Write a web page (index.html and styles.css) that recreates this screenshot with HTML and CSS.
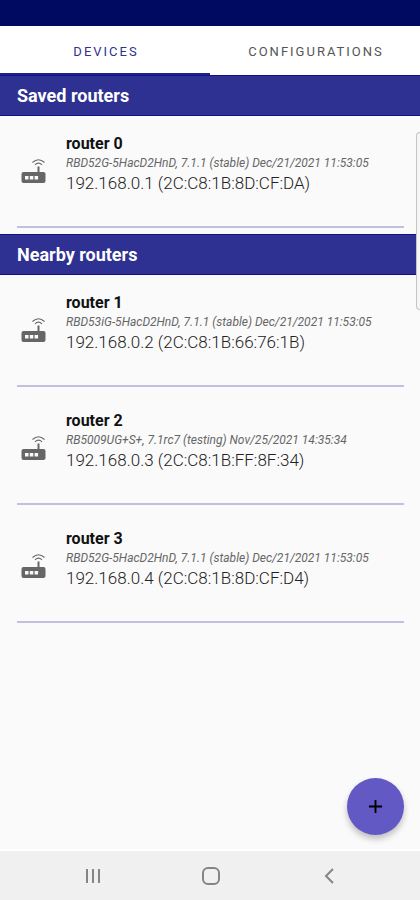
FILE: index.html
```html
<!DOCTYPE html>
<html lang="en">
<head>
<meta charset="utf-8">
<meta name="viewport" content="width=device-width, initial-scale=1">
<title>Routers</title>
<link rel="stylesheet" href="styles.css">
</head>
<body>
<svg class="symbols" aria-hidden="true">
  <symbol id="router" viewBox="0 0 26 28">
    <path d="M12 6.500Q18 1 24 6.500M14.500 8.800Q18 5.500 21.500 8.800" fill="none" stroke="currentColor" stroke-width="1.100"/>
    <path fill-rule="evenodd" fill="currentColor" d="M17 10.500h2V16h4a2 2 0 0 1 2 2v7a2 2 0 0 1-2 2H3a2 2 0 0 1-2-2v-7a2 2 0 0 1 2-2h14zM4.500 20v3.500h3.500v-3.500zM9.300 20v3.500h3.500v-3.500zM14.100 20v3.500h3.500v-3.500z"/>
  </symbol>
</svg>
<header>
  <div class="status-bar"></div>
  <nav class="tabs">
    <a class="tab tab-active" href="#devices" aria-current="page">DEVICES</a>
    <a class="tab" href="#configurations">CONFIGURATIONS</a>
  </nav>
</header>
<main class="content" id="devices">
  <section>
    <h2 class="section-title">Saved routers</h2>
    <ul class="routers">
      <li class="router">
        <svg class="router-icon" aria-hidden="true"><use href="#router"/></svg>
        <div class="router-text">
          <h3 class="name">router 0</h3>
          <p class="version">RBD52G-5HacD2HnD, 7.1.1 (stable) Dec/21/2021 11:53:05</p>
          <p class="address">192.168.0.1 (2C:C8:1B:8D:CF:DA)</p>
        </div>
      </li>
    </ul>
  </section>
  <section>
    <h2 class="section-title">Nearby routers</h2>
    <ul class="routers">
      <li class="router">
        <svg class="router-icon" aria-hidden="true"><use href="#router"/></svg>
        <div class="router-text">
          <h3 class="name">router 1</h3>
          <p class="version">RBD53iG-5HacD2HnD, 7.1.1 (stable) Dec/21/2021 11:53:05</p>
          <p class="address">192.168.0.2 (2C:C8:1B:66:76:1B)</p>
        </div>
      </li>
      <li class="router">
        <svg class="router-icon" aria-hidden="true"><use href="#router"/></svg>
        <div class="router-text">
          <h3 class="name">router 2</h3>
          <p class="version">RB5009UG+S+, 7.1rc7 (testing) Nov/25/2021 14:35:34</p>
          <p class="address">192.168.0.3 (2C:C8:1B:FF:8F:34)</p>
        </div>
      </li>
      <li class="router">
        <svg class="router-icon" aria-hidden="true"><use href="#router"/></svg>
        <div class="router-text">
          <h3 class="name">router 3</h3>
          <p class="version">RBD52G-5HacD2HnD, 7.1.1 (stable) Dec/21/2021 11:53:05</p>
          <p class="address">192.168.0.4 (2C:C8:1B:8D:CF:D4)</p>
        </div>
      </li>
    </ul>
  </section>
  <button class="add" type="button" aria-label="Add router">
    <svg width="15" height="15" viewBox="0 0 16 16" aria-hidden="true"><path d="M8 1v14M1 8h14" stroke="currentColor" stroke-width="2"/></svg>
  </button>
</main>
<div class="edge-handle"></div>
<nav class="system-nav">
  <button type="button" aria-label="Recent apps"><svg width="20" height="20" viewBox="0 0 20 20"><path d="M4 3v14M10 3v14M16 3v14"/></svg></button>
  <button type="button" aria-label="Home"><svg width="20" height="20" viewBox="0 0 20 20"><rect x="2" y="2" width="16" height="16" rx="5"/></svg></button>
  <button type="button" aria-label="Back"><svg width="20" height="20" viewBox="0 0 20 20"><path d="M14 3L7 10l7 7"/></svg></button>
</nav>
</body>
</html>
```
FILE: styles.css
```css
* { box-sizing: border-box; }

body {
  position: relative;
  display: flex;
  flex-direction: column;
  min-height: 100vh;
  margin: 0;
  background: #fafafa;
  color: #111;
  font-family: Roboto, sans-serif;
}

h2, h3, p, ul { margin: 0; padding: 0; }

.symbols { position: absolute; width: 0; height: 0; }

.status-bar { height: 26px; background: #000a60; }

.tabs { display: grid; grid-template-columns: 1fr 1fr; height: 49px; background: #fff; }

.tab {
  display: flex;
  align-items: center;
  justify-content: center;
  padding: 4px 0 0 2px;
  border-bottom: 2px solid transparent;
  color: #555;
  font-size: 13px;
  letter-spacing: 2px;
  text-decoration: none;
}

.tab-active { border-color: #20208a; color: #2e3192; }

.content { position: relative; flex: 1; border-bottom: 2px solid #fff; }

.section-title {
  padding: 0 17px;
  border: solid #10108a;
  border-width: 1px 0;
  background: #2e3192;
  color: #fff;
  font-size: 18px;
  font-weight: 700;
  line-height: 39px;
}

.routers { padding: 0 16px 0 17px; list-style: none; }

.router {
  display: flex;
  gap: 16px;
  height: 112px;
  margin-bottom: 6px;
  padding-top: 18px;
  border-bottom: 2px solid #c0c0e0;
}

.router-icon { flex: none; width: 33px; height: 28px; margin-top: 22px; color: #666; }

.name { font-size: 16px; font-weight: 700; line-height: 20px; }

.version { color: #666; font-size: 12px; font-style: italic; font-weight: 400; line-height: 18px; }

.address { color: #222; font-size: 17px; font-weight: 300; line-height: 22px; }

.add {
  position: absolute;
  right: 16px;
  bottom: 14px;
  display: grid;
  place-items: center;
  width: 57px;
  height: 57px;
  padding: 0;
  border: 0;
  border-radius: 50%;
  background: #6259c5;
  box-shadow: 0 4px 6px rgba(0, 0, 0, 0.24);
  color: #000;
}

.edge-handle {
  position: absolute;
  top: 132px;
  right: 0;
  width: 4px;
  height: 178px;
  border: 1px solid #c4c4c8;
  border-right: 0;
  border-radius: 4px 0 0 4px;
  background: #f6f6f6;
}

.system-nav {
  display: flex;
  justify-content: center;
  gap: 78px;
  height: 49px;
  padding-left: 2px;
  background: #f0f0f0;
}

.system-nav button {
  display: grid;
  place-items: center;
  width: 40px;
  padding: 0;
  border: 0;
  background: none;
}

.system-nav svg { fill: none; stroke: #858585; stroke-width: 2; }
```
